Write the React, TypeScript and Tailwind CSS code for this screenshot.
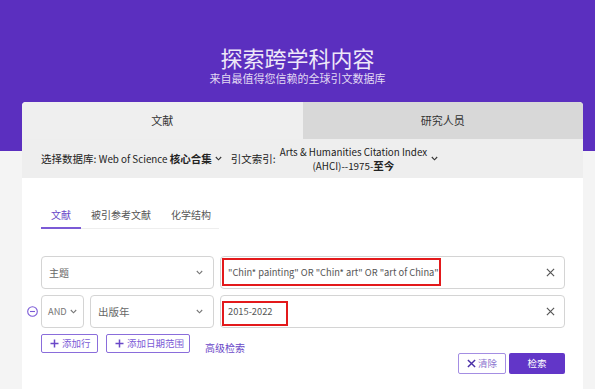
import React from "react";

const font = { fontFamily: '"Noto Sans CJK SC", "Noto Sans", sans-serif' };

function Chevron({ className = "" }: { className?: string }) {
  return (
    <svg width="7" height="5" viewBox="0 0 7 5" className={className}>
      <polyline points="0.8,1 3.5,3.8 6.2,1" fill="none" stroke="currentColor" strokeWidth="1.1" />
    </svg>
  );
}

function XIcon({ size = 9, stroke = 1.3, className = "" }: { size?: number; stroke?: number; className?: string }) {
  return (
    <svg width={size} height={size} viewBox="0 0 10 10" className={className}>
      <path d="M1 1 L9 9 M9 1 L1 9" stroke="currentColor" strokeWidth={stroke} fill="none" />
    </svg>
  );
}

function Plus() {
  return (
    <svg width="9" height="9" viewBox="0 0 9 9" className="text-[#6a48c8]">
      <path d="M4.5 0.5 V8.5 M0.5 4.5 H8.5" stroke="currentColor" strokeWidth="1.5" fill="none" />
    </svg>
  );
}

export default function App() {
  return (
    <div
      className="w-[595px] h-[389px] overflow-hidden bg-[linear-gradient(#5b2fbf_151px,#f4f4f4_151px)] flex flex-col"
      style={font}
    >
      <div className="pt-[45px] flex flex-col items-center">
        <div className="text-[22px] leading-[24px] text-[#eee8f8]">探索跨学科内容</div>
        <div className="mt-[2px] text-[11px] leading-[14px] text-[#e2daf3]">来自最值得您信赖的全球引文数据库</div>
      </div>

      <div className="ml-[22px] mr-[12px] mt-[17px] flex-1 bg-white rounded-t-[4px] overflow-hidden flex flex-col">
        {/* tabs */}
        <div className="flex h-[37px] text-[11px] text-[#333]">
          <div className="flex-1 bg-[#efefef] flex items-center justify-center">文献</div>
          <div className="flex-1 bg-[#d8d8d8] flex items-center justify-center">研究人员</div>
        </div>

        {/* database row */}
        <div className="h-[39px] bg-[#eeeeee] flex items-center pl-[19px] text-[10.5px] text-[#222] leading-[14px] whitespace-nowrap">
          <span>
            选择数据库: <span className="text-[9.8px]">Web of Science</span> <b className="font-bold">核心合集</b>
          </span>
          <Chevron className="ml-[3px] text-[#333]" />
          <span className="ml-[9px]">引文索引:</span>
          <div className="ml-[4px] flex flex-col items-center">
            <span className="text-[9.8px]">Arts &amp; Humanities Citation Index</span>
            <span>
              <span className="text-[9.8px]">(AHCI)--1975-</span>
              <b className="font-bold">至今</b>
            </span>
          </div>
          <Chevron className="ml-[4px] text-[#333]" />
        </div>

        {/* body */}
        <div className="pl-[19px] pr-[18px] flex flex-col">
          <div className="mt-[30px] flex w-[178px] border-b border-[#eeeeee] text-[10px] leading-[14px] whitespace-nowrap">
            <div className="shrink-0 px-[10px] pb-[5px] border-b-2 border-[#7b5ad6] -mb-px text-[#6a48c8]">文献</div>
            <div className="shrink-0 px-[10px] pb-[5px] -mb-px text-[#555]">被引参考文献</div>
            <div className="shrink-0 px-[10px] pb-[5px] -mb-px text-[#555]">化学结构</div>
          </div>

          {/* row 1 */}
          <div className="mt-[27px] flex gap-[6px] h-[33px]">
            <div className="w-[173px] border border-[#d4d4d4] rounded-[4px] flex items-center justify-between pl-[7px] pr-[10px] text-[10px] text-[#666]">
              <span>主题</span>
              <Chevron className="text-[#777]" />
            </div>
            <div className="relative flex-1 border border-[#d4d4d4] rounded-[4px] flex items-center justify-between pl-[7px] pr-[9px] text-[9.3px] text-[#555] whitespace-nowrap">
              <span>"Chin* painting" OR "Chin* art" OR "art of China"</span>
              <XIcon className="text-[#555]" />
              <div className="absolute left-[1px] top-[1px] w-[219px] h-[28px] border-2 border-[#e3191b]" />
            </div>
          </div>

          {/* row 2 */}
          <div className="mt-[6px] flex items-center h-[33px] -ml-[14px]">
            <svg width="11" height="11" viewBox="0 0 11 11" className="text-[#7b5ad6] mr-[3px] shrink-0">
              <circle cx="5.5" cy="5.5" r="4.8" fill="none" stroke="currentColor" strokeWidth="1.1" />
              <path d="M3 5.5 H8" stroke="currentColor" strokeWidth="1.1" />
            </svg>
            <div className="flex gap-[6px] h-full flex-1">
              <div className="w-[43px] border border-[#d4d4d4] rounded-[4px] flex items-center pl-[6px] gap-[3px] text-[9.3px] text-[#777]">
                <span>AND</span>
                <Chevron className="text-[#777]" />
              </div>
              <div className="w-[124px] border border-[#d4d4d4] rounded-[4px] flex items-center justify-between pl-[7px] pr-[10px] text-[10.5px] text-[#666]">
                <span>出版年</span>
                <Chevron className="text-[#777]" />
              </div>
              <div className="relative flex-1 border border-[#d4d4d4] rounded-[4px] flex items-center justify-between pl-[7px] pr-[9px] text-[9.3px] text-[#555]">
                <span>2015-2022</span>
                <XIcon className="text-[#555]" />
                <div className="absolute left-[1px] top-[5px] w-[66px] h-[25px] border-2 border-[#e3191b]" />
              </div>
            </div>
          </div>

          {/* row 3 */}
          <div className="mt-[6px] flex items-center h-[19px] whitespace-nowrap">
            <div className="h-full w-[57px] border border-[#8a6ddb] rounded-[2px] flex items-center pl-[8px] gap-[3px] text-[9.5px] text-[#7b5ad6]">
              <Plus />
              <span>添加行</span>
            </div>
            <div className="ml-[8px] h-full w-[84px] border border-[#8a6ddb] rounded-[2px] flex items-center pl-[8px] gap-[3px] text-[9.5px] text-[#7b5ad6]">
              <Plus />
              <span>添加日期范围</span>
            </div>
            <span className="ml-[15px] mt-[8px] text-[10px] text-[#6a48c8]">高级检索</span>
          </div>

          {/* action buttons */}
          <div className="flex justify-end gap-[3px] h-[21px]">
            <div className="w-[48px] h-full border border-[#a48ee3] rounded-[2px] flex items-center justify-center gap-[2px] text-[9.5px] text-[#8a74cf]">
              <XIcon size={9} stroke={1.6} className="text-[#4a2fa6]" />
              <span>清除</span>
            </div>
            <div className="w-[56px] h-full bg-[#6236c8] rounded-[2px] flex items-center justify-center text-[9.5px] text-white">
              检索
            </div>
          </div>
        </div>
      </div>
    </div>
  );
}
